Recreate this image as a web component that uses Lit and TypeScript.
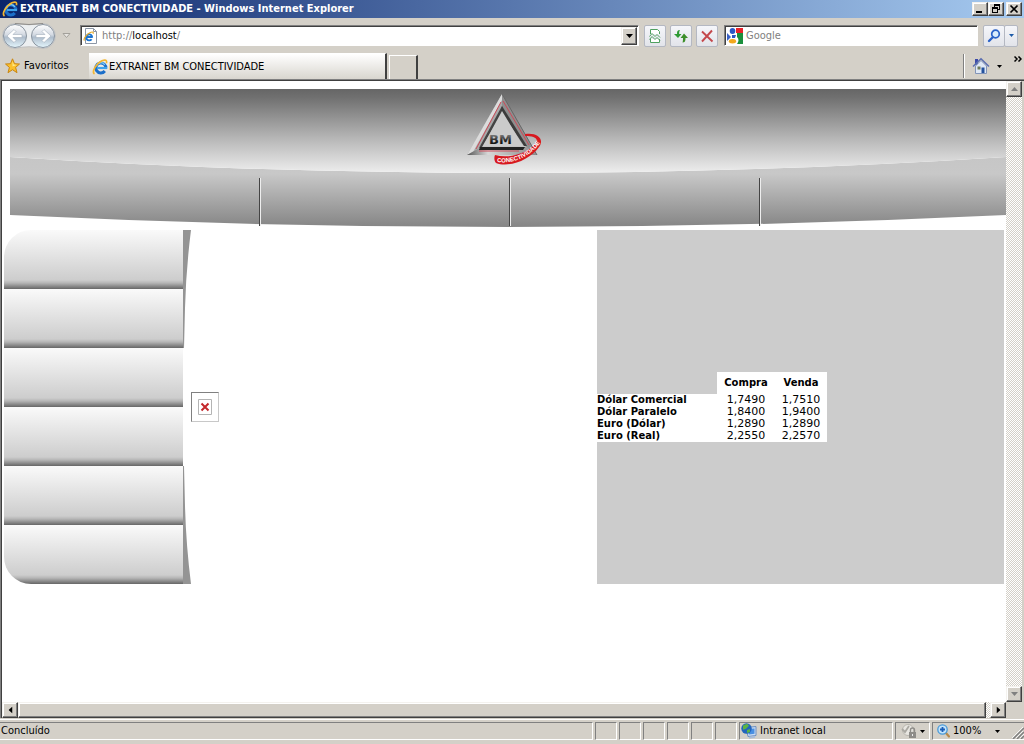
import { LitElement, html, css, svg } from "lit";
import { customElement } from "lit/decorators.js";

const ieLogo = html`<svg class="ie" viewBox="0 0 16 16" aria-hidden="true">
  <path d="M13.800 9.500A5 5 0 1 0 12.800 12" fill="none" stroke="#1c6fc9" stroke-width="3" />
  <path d="M5 9h10" stroke="#3da3ec" stroke-width="2.200" />
  <path d="M4.500 6.500A4.800 4.800 0 0 1 12.800 5.800" fill="none" stroke="#7dcdf9" stroke-width="1.300" />
  <path d="M2.500 15C-.6 13 4 4.600 10 1.800c3.400-1.500 5.200-.8 4.400 2.400" fill="none" stroke="#f2b632" stroke-width="1.700" />
</svg>`;

const caret = html`<svg class="caret" viewBox="0 0 7 4" aria-hidden="true"><path d="M0 0h7L3.500 4z" fill="currentColor" /></svg>`;

const rates = [
  ["Dólar Comercial", "1,7490", "1,7510"],
  ["Dólar Paralelo", "1,8400", "1,9400"],
  ["Euro (Dólar)", "1,2890", "1,2890"],
  ["Euro (Real)", "2,2550", "2,2570"],
];

const bevel = css`
  button {
    font: inherit;
    color: #000;
    padding: 0;
    margin: 0;
    display: flex;
    align-items: center;
    justify-content: center;
    border: 0;
    background: none;
    border-radius: 0;
    flex: none;
  }
  .raised {
    background: #d4d0c8;
    border: 1px solid;
    border-color: #f4f2ee #404040 #404040 #f4f2ee;
    box-shadow: inset -1px -1px #808080, inset 1px 1px #fff;
  }
  svg { display: block; flex: none; }
  .caret { width: 7px; height: 4px; }
`;

@customElement("window-title")
class WindowTitle extends LitElement {
  static styles = [bevel, css`
    :host { display: flex; align-items: center; height: 18px; padding: 0 2px; background: linear-gradient(90deg, #0a246a, #a6caf0); color: #fff; }
    h1 { font-size: 11px; line-height: 14px; font-weight: bold; margin: 0 auto 0 2px; white-space: nowrap; }
    .ie { width: 16px; height: 16px; }
    .raised { width: 16px; height: 14px; }
    .close { margin-left: 2px; }
    .glyph { width: 10px; height: 10px; }
  `];
  render() {
    return html`${ieLogo}
      <h1>EXTRANET BM CONECTIVIDADE - Windows Internet Explorer</h1>
      <button class="raised" aria-label="Minimizar"><svg class="glyph" viewBox="0 0 10 10"><path d="M1 7h6v2H1z" /></svg></button>
      <button class="raised" aria-label="Restaurar"><svg class="glyph" viewBox="0 0 10 10"><path d="M3 0h6v6H7V5h1V2H4v1H3zM1 3h6v6H1zm1 2v3h4V5z" fill-rule="evenodd" /></svg></button>
      <button class="raised close" aria-label="Fechar"><svg class="glyph" viewBox="0 0 10 10"><path d="M1.500 1.500l7 7m0-7l-7 7" stroke="#000" stroke-width="1.700" /></svg></button>`;
  }
}

@customElement("nav-toolbar")
class NavToolbar extends LitElement {
  static styles = [bevel, css`
    :host { display: flex; align-items: center; height: 35px; padding: 0 6px 0 2px; }
    .travel { width: 54px; height: 28px; }
    .travel-group { display: flex; position: relative; }
    .travel-hit { position: absolute; inset: 0; display: flex; }
    .travel-hit button { flex: 1; }
    .recent { width: 20px; height: 20px; }
    .field { display: flex; align-items: center; box-sizing: border-box; height: 21px; background: #fff; border: 1px solid; border-color: #808080 #fff #fff #808080; box-shadow: inset 1px 1px #404040; }
    .address { flex: 1; margin: 0 5px 0 4px; padding: 1px 1px 0 2px; }
    .search { width: 254px; margin: 0 5px 0 6px; padding: 1px 0 0 2px; }
    .entry { position: relative; flex: 1; margin-left: 3px; height: 16px; }
    input { font: inherit; line-height: 16px; border: 0; padding: 0; margin: 0; outline: 0; background: none; width: 100%; height: 16px; color: #808080; display: block; }
    input::placeholder { color: #808080; opacity: 1; }
    .address input { color: transparent; caret-color: #000; }
    .url { position: absolute; inset: 0; line-height: 16px; color: #808080; pointer-events: none; }
    .url b { font-weight: normal; color: #000; }
    .drop { width: 16px; height: 18px; }
    .tools { display: flex; gap: 4px; }
    .tool { width: 22px; height: 22px; background: linear-gradient(#f5f6fa, #e2e4ea); border: 1px solid #b4b8c2; border-radius: 2px; box-sizing: border-box; }
    .tool svg { width: 16px; height: 16px; }
    .find { display: flex; }
    .more { width: 14px; margin-left: -1px; color: #1c5ba8; }
    .tool .caret { width: 5px; height: 3px; }
    .page { width: 16px; height: 16px; }
    .recent svg { width: 9px; height: 6px; }
  `];
  render() {
    return html`
      <div class="travel-group">
        <svg class="travel" viewBox="0 0 54 28" aria-hidden="true">
          <defs><linearGradient id="orb" x2="0" y2="1"><stop offset="0" stop-color="#fff" /><stop offset=".45" stop-color="#d3d9e2" /><stop offset=".55" stop-color="#aebccb" /><stop offset="1" stop-color="#e4f6fd" /></linearGradient></defs>
          <path d="M13 1.500Q27 4 41 1.500a12.500 12.500 0 0 1 0 25Q27 23 13 26.500a12.500 12.500 0 0 1 0-25z" fill="#eceff1" stroke="#bfbfbf" />
          <path d="M13 1.500Q27 3.500 41 1.500" fill="none" stroke="#8f8d89" />
          <circle cx="13" cy="14" r="11.500" fill="url(#orb)" stroke="#8a949f" />
          <circle cx="41" cy="14" r="11.500" fill="url(#orb)" stroke="#8a949f" />
          <path d="M5 14l7-6.500 2 2-3 3h9v3h-9l3 3-2 2z" fill="#fff" stroke="#a3afbc" stroke-width=".6" />
          <path d="M49 14l-7-6.500-2 2 3 3h-9v3h9l-3 3 2 2z" fill="#fff" stroke="#a3afbc" stroke-width=".6" />
        </svg>
        <div class="travel-hit"><button aria-label="Voltar"></button><button aria-label="Avançar"></button></div>
      </div>
      <button class="recent" aria-label="Páginas recentes"><svg viewBox="0 0 9 6"><path d="M1 .5h7L4.500 4.500z" fill="#e8e6e2" stroke="#a3a09a" /></svg></button>
      <div class="field address">
        <svg class="page" viewBox="0 0 16 16" aria-hidden="true">
          <path d="M2.500.5h8l3 3v12h-11z" fill="#fff" stroke="#8c97a6" /><path d="M10.500.5v3h3" fill="none" stroke="#8c97a6" />
          <path d="M9.200 9.500A3 3 0 1 0 8.600 11.200M3.500 9h6" fill="none" stroke="#1c74cf" stroke-width="1.900" />
          <path d="M1.500 12.500C-.2 11 4 5.500 8 4.200c2-.6 2.600 0 2 1.600" fill="none" stroke="#e4a92a" stroke-width="1.200" />
        </svg>
        <div class="entry"><input aria-label="Endereço" value="http://localhost/" /><span class="url" aria-hidden="true">http://<b>localhost</b>/</span></div>
        <button class="raised drop" aria-label="Mostrar endereços">${caret}</button>
      </div>
      <div class="tools">
        <button class="tool" aria-label="Modo de exibição"><svg viewBox="0 0 16 16"><path d="M3.500 6V1.500h7l2 2V6M3.500 11v3.500h9V11" fill="#fff" stroke="#4fa060" /><path d="M2.500 8.500l2.500-3 3 3 2-2 3 3M2.500 11.500l2.500-3 3 3 2-2 3 3" fill="none" stroke="#4fa060" /></svg></button>
        <button class="tool" aria-label="Atualizar"><svg viewBox="0 0 16 16"><path d="M7 2C4.500 2 4 3 4 6H1l4 4 3.500-4H6.200c0-2 0-2.500.8-4z" fill="#2f9b36" /><path d="M9.500 14.500c2.500 0 3-1.500 3-4.500H15l-4-4.500L7.500 10H10c0 2 0 3-.5 4.500z" fill="#3d8f2a" /></svg></button>
        <button class="tool" aria-label="Parar"><svg viewBox="0 0 16 16"><path d="M3 3.500l10.500 10M13 2.500L3 13.500" fill="none" stroke="#c4484c" stroke-width="1.900" /></svg></button>
      </div>
      <div class="field search">
        <svg class="page" viewBox="0 0 16 16" aria-hidden="true"><path fill="#fff" d="M0 0h16v16H0z" /><path d="M9 0h7v5H9z" fill="#e8232a" /><path d="M10 5h6v11h-6c2-3 2-5 0-7z" fill="#1a8f3c" /><path d="M0 5l4 4-4 4z" fill="#3b62c4" /><ellipse cx="5.500" cy="3" rx="2.800" ry="3" fill="#2c57c6" /><path d="M5 7h4l-1 3H5z" fill="#2c57c6" /><ellipse cx="5.500" cy="13.300" rx="3.600" ry="2.200" fill="#f3a81c" /></svg>
        <div class="entry"><input aria-label="Pesquisar" placeholder="Google" /></div>
      </div>
      <div class="find">
        <button class="tool" aria-label="Executar pesquisa"><svg viewBox="0 0 16 16"><path d="M7.500 8.500L3 13" stroke="#2a62c8" stroke-width="2.400" stroke-linecap="round" /><circle cx="9.500" cy="6" r="3.800" fill="#d9ecfc" stroke="#2a62c8" stroke-width="1.700" /></svg></button>
        <button class="tool more" aria-label="Opções de pesquisa">${caret}</button>
      </div>`;
  }
}

@customElement("tab-strip")
class TabStrip extends LitElement {
  static styles = [bevel, css`
    :host { display: flex; height: 26px; padding: 0 2px 0 5px; align-items: center; }
    .fav { gap: 4px; width: 84px; justify-content: flex-start; }
    .fav svg { width: 15px; height: 16px; }
    .tab { box-sizing: border-box; width: 298px; height: 26px; gap: 1px; padding-left: 3px; justify-content: flex-start; white-space: nowrap; background: linear-gradient(#fff, #d9d6cf); border-top: 1px solid #fff; border-right: 2px solid #404040; }
    .ie { width: 16px; height: 16px; }
    .new { align-self: flex-end; box-sizing: border-box; width: 29px; height: 24px; margin-left: 2px; border: 1px solid #fff; border-bottom: 0; border-right: 2px solid #404040; }
    .rule { width: 1px; height: 24px; background: #808080; border-right: 1px solid #fff; margin-left: auto; }
    .home { gap: 7px; margin-left: 7px; }
    .home .house { width: 18px; height: 18px; }
    .home .caret { width: 5px; height: 3px; }
    .chevrons { margin: 0 0 14px 12px; }
    .chevrons svg { width: 8px; height: 6px; }
  `];
  render() {
    return html`
      <button class="fav"><svg viewBox="0 0 15 16" aria-hidden="true"><path d="M7.500.8l2 4.900 5 .3-3.900 3.400 1.400 5.300-4.500-3-4.500 3 1.400-5.300L.5 6l5-.3z" fill="#fbc02a" stroke="#c98612" stroke-linejoin="round" /><path d="M7.500 3l1.200 3.600 3 .3-4.200 1.600z" fill="#ffe88a" /></svg>Favoritos</button>
      <button class="tab">${ieLogo}EXTRANET BM CONECTIVIDADE</button>
      <button class="new" aria-label="Nova guia"></button>
      <span class="rule"></span>
      <button class="home" aria-label="Página inicial"><svg class="house" viewBox="0 0 18 18"><path d="M3 2h3v6H3z" fill="#3b49a8" /><path d="M3.500 9v7.500h11V9L9 3.500z" fill="#dfe8f5" stroke="#8294b8" /><path d="M1 9.500L9 1.800l8 7.700" fill="none" stroke="#5c6fb0" stroke-width="1.500" /><path d="M9.500 10.500h3V16h-3z" fill="#24519c" /><path d="M5.500 9.500h3v3h-3z" fill="#6d7a58" /></svg>${caret}</button>
      <button class="chevrons" aria-label="Mais comandos"><svg viewBox="0 0 8 6"><path d="M.5.5L3 3 .5 5.500M4.500.5L7 3 4.500 5.500" fill="none" stroke="#000" stroke-width="1.500" /></svg></button>`;
  }
}

@customElement("site-banner")
class SiteBanner extends LitElement {
  static styles = css`
    :host { display: grid; height: 138px; }
    .sweep, .rules, .logo { grid-area: 1 / 1; }
    .sweep { width: 100%; height: 138px; display: block; }
    .rules { display: grid; grid-template-columns: repeat(4, 250px); justify-content: start; padding: 89px 0 1px 1px; overflow: hidden; }
    .rules i { border-right: 1px solid #eee; box-shadow: inset -1px 0 #444; }
    .rules i:last-child { border: 0; box-shadow: none; }
    .logo { width: 76px; height: 74px; margin: 4px 6px 0 0; justify-self: center; }
  `;
  render() {
    return html`
      <svg class="sweep" viewBox="0 0 996 138" preserveAspectRatio="none" aria-hidden="true">
        <defs>
          <linearGradient id="top" gradientUnits="userSpaceOnUse" x1="0" y1="0" x2="0" y2="84"><stop offset="0" stop-color="#666" /><stop offset=".1" stop-color="#707070" /><stop offset=".6" stop-color="#b8b8b8" /><stop offset="1" stop-color="#eee" /></linearGradient>
          <linearGradient id="low" gradientUnits="userSpaceOnUse" x1="0" y1="68" x2="0" y2="138"><stop offset="0" stop-color="#c6c6c6" /><stop offset=".24" stop-color="#c8c8c8" /><stop offset="1" stop-color="#858585" /></linearGradient>
        </defs>
        <path d="M0 68Q498 100 996 68V126Q498 150 0 126z" fill="url(#low)" />
        <path d="M0 0H996V68Q498 100 0 68z" fill="url(#top)" />
      </svg>
      <div class="rules"><i></i><i></i><i></i><i></i></div>
      <svg class="logo" viewBox="0 0 76 74" role="img" aria-label="BM Conectividade">
        <defs>
          <linearGradient id="steel" x2="1" y2="0"><stop offset="0" stop-color="#555" /><stop offset=".3" stop-color="#d8d8d8" /><stop offset="1" stop-color="#888" /></linearGradient>
          <linearGradient id="letters" x2="0" y2="1"><stop offset=".2" stop-color="#777" /><stop offset=".6" stop-color="#222" /><stop offset="1" stop-color="#000" /></linearGradient>
        </defs>
        <path d="M35 1L0 62L14 54L35 15z" fill="#a9a9a9" />
        <path d="M35 1L0 62L6 59L35 7z" fill="#dcdcdc" />
        <path d="M0 62L14 54H59L70 62z" fill="url(#steel)" />
        <path d="M35 1V15L59 54L70 62z" fill="#8e8e8e" />
        <path d="M35 1L70 62" stroke="#666" />
        <path d="M35 13L12 55L15 54L36 18z" fill="#444" />
        <path d="M35 13L60 53L57 53L34 18z" fill="#3c3c3c" />
        <path d="M13 54H58L56 57H12z" fill="#222" />
        <path d="M34 9L9 56M36 8L62 52M12 58H52" stroke="#cc4a58" fill="none" />
        <path d="M35 18L16 53H56z" fill="#cbcbcb" />
        <text x="22" y="51" font-family="DejaVu Sans, sans-serif" font-size="13" font-weight="bold" fill="url(#letters)">BM</text>
        <path d="M58 41C70 39 78 46 72 54C63 67 42 75 29 70C27 68 27 64 28 62C43 66 61 60 69 50C72 45 66 43 58 43z" fill="#d71920" />
        <path id="arc" d="M30 69C46 71 62 65 74 49" fill="none" />
        <text font-family="Liberation Sans, sans-serif" font-size="6" font-weight="bold" fill="#fff"><textPath href="#arc">CONECTIVIDADE</textPath></text>
      </svg>`;
  }
}

@customElement("side-menu")
class SideMenu extends LitElement {
  static styles = css`
    :host { display: flex; flex: none; }
    nav { width: 179px; border-radius: 27px 0 0 27px; overflow: hidden; }
    a { display: block; height: 59px; background: linear-gradient(#fafafa 0, #cdcdcd 50px, #b5b5b5 53px, #666 59px); }
    svg { width: 8px; height: 354px; display: block; }
  `;
  render() {
    return html`<nav aria-label="Menu">${[1, 2, 3, 4, 5, 6].map((n) => html`<a href="#" aria-label=${"Seção " + n}></a>`)}</nav>
      <svg viewBox="0 0 8 354" aria-hidden="true">${svg`<path d="M0 0H8Q3 40 2 78L1 118H0zM0 236H1L2 276Q3 314 8 354H0z" fill="#949494" />`}</svg>`;
  }
}

@customElement("rates-table")
class RatesTable extends LitElement {
  static styles = css`
    table { border-collapse: collapse; table-layout: fixed; width: 230px; font: 11px/12px "DejaVu Sans", sans-serif; color: #000; }
    th, td { padding: 0; background: #fff; height: 12px; text-align: center; white-space: nowrap; }
    th { font-size: 10px; }
    thead th { height: 22px; }
    thead td { background: none; }
    tbody th { text-align: left; }
    .name { width: 120px; }
    .buy { width: 58px; }
  `;
  render() {
    return html`<table>
      <thead><tr><td class="name"></td><th class="buy" scope="col">Compra</th><th scope="col">Venda</th></tr></thead>
      <tbody>${rates.map(([name, buy, sell]) => html`<tr><th scope="row">${name}</th><td>${buy}</td><td>${sell}</td></tr>`)}</tbody>
    </table>`;
  }
}

@customElement("page-view")
class PageView extends LitElement {
  static styles = [bevel, css`
    :host { display: grid; grid-template: minmax(0, 1fr) 16px / minmax(0, 1fr) 16px; min-height: 0; padding: 1px 2px 0 1px; border: 1px solid #808080; border-width: 1px 0 0 1px; box-shadow: inset 1px 1px #404040; background: #d4d0c8; }
    main { background: #fff; overflow: hidden; }
    site-banner { margin: 8px 0 3px 8px; }
    .body { display: flex; padding: 0 2px; }
    .left, .right { flex: 1 1 0px; display: flex; align-items: center; }
    .right { flex-basis: 1px; background: #ccc; }
    .missing { box-sizing: border-box; width: 28px; height: 30px; border: 1px solid; border-color: #808080 #c8c8c8 #c8c8c8 #808080; display: grid; place-items: center; }
    .missing svg { width: 14px; height: 16px; }
    .bar { display: flex; }
    .down { flex-direction: column; }
    .track { flex: 1; background: repeating-conic-gradient(#fff 0 25%, #d4d0c8 0 50%) 0 0 / 2px 2px; display: flex; }
    .thumb { flex: 1; margin-right: 4px; }
    .bar button { width: 16px; height: 16px; }
    .off { color: #808080; }
    .up .caret { transform: rotate(180deg); }
    .west .caret { transform: rotate(90deg); }
    .east .caret { transform: rotate(-90deg); }
  `];
  render() {
    return html`
      <main>
        <site-banner></site-banner>
        <div class="body">
          <side-menu></side-menu>
          <div class="left"><div class="missing" role="img" aria-label="Imagem indisponível"><svg viewBox="0 0 14 16"><path d="M.5.5h13v15H.5z" fill="#fff" stroke="#b4b4b4" /><path d="M3.500 4.500l7 7m0-7l-7 7" stroke="#c4282c" stroke-width="2" /></svg></div></div>
          <div class="right"><rates-table></rates-table></div>
        </div>
      </main>
      <div class="bar down">
        <button class="raised off up" aria-label="Rolar para cima">${caret}</button>
        <div class="track"></div>
        <button class="raised off" aria-label="Rolar para baixo">${caret}</button>
      </div>
      <div class="bar">
        <button class="raised west" aria-label="Rolar para a esquerda">${caret}</button>
        <div class="track"><div class="thumb raised"></div></div>
        <button class="raised east" aria-label="Rolar para a direita">${caret}</button>
      </div>`;
  }
}

@customElement("status-bar")
class StatusBar extends LitElement {
  static styles = [bevel, css`
    :host { display: flex; gap: 2px; padding: 2px 0 1px; margin: 1px 0 3px; border-top: 1px solid #fff; }
    .cell { box-sizing: border-box; display: flex; align-items: center; height: 18px; border: 1px solid; border-color: #808080 #fff #fff #808080; width: 22px; white-space: nowrap; }
    .message { flex: 1; border-left: 0; padding-left: 1px; }
    .zone { width: 154px; gap: 3px; padding-left: 1px; }
    .zone svg, .lock svg:first-child, .scale svg:first-child { width: 16px; height: 16px; }
    .lock { width: 35px; gap: 3px; }
    .scale { width: 92px; gap: 1px; padding-left: 3px; border-right: 0; }
    .scale .caret { margin-left: 13px; }
    .cell .caret { width: 5px; height: 3px; }
    .grip { width: 12px; height: 12px; margin: 4px 0 0 auto; }
  `];
  render() {
    return html`
      <div class="cell message" role="status">Concluído</div>
      ${[0, 1, 2, 3, 4, 5].map(() => html`<div class="cell"></div>`)}
      <div class="cell zone"><svg viewBox="0 0 16 16" aria-hidden="true"><path d="M5 4.500l10-1v9l-8 1z" fill="#c9dcf3" stroke="#6e8fc0" /><path d="M7 6l6.500-.6v5.400L8 11.500z" fill="#4a90e2" /><path d="M8 14.800l6-1" stroke="#a9bcd8" stroke-width="2" /><circle cx="5.500" cy="5.500" r="5.200" fill="#2366bd" /><path d="M2 2.500l4-1.700 2 2-3 3-3 1zM6 7l3-1v3l-3 1z" fill="#5cb544" /></svg>Intranet local</div>
      <button class="cell lock" aria-label="Modo protegido"><svg viewBox="0 0 16 16"><circle cx="7" cy="7" r="5.500" fill="#e8e6e1" stroke="#b9b6af" /><path d="M1 6l3 3 4-6" fill="none" stroke="#aaa8a2" stroke-width="1.800" /><path d="M8 9h7v6H8z" fill="#8e8c88" /><path d="M9.500 9V7a2 2 0 0 1 4 0v2" fill="none" stroke="#8e8c88" stroke-width="1.400" /><path d="M11 11h1v2h-1z" fill="#eee" /></svg>${caret}</button>
      <button class="cell scale"><svg viewBox="0 0 16 16" aria-hidden="true"><path d="M9 9l4 4.500" stroke="#b98a4a" stroke-width="2.200" stroke-linecap="round" /><circle cx="6.500" cy="6.500" r="4.700" fill="#c3e3fa" stroke="#4a9ad8" stroke-width="1.300" /><path d="M6.500 4v5M4 6.500h5" stroke="#1c5fb8" stroke-width="1.800" /></svg>100%${caret}<svg class="grip" viewBox="0 0 12 12" aria-hidden="true"><path d="M1 12L12 1M5 12l7-7M9 12l3-3" stroke="#808080" stroke-width="1.500" /><path d="M0 11L11 0M4 11l7-7M8 11l4-4" stroke="#fff" stroke-width=".8" /></svg></button>`;
  }
}

@customElement("app-root")
class AppRoot extends LitElement {
  static styles = css`
    :host { display: flex; flex-direction: column; height: 100vh; background: #d4d0c8; color: #000; font: 11px/14px "DejaVu Sans Condensed", "DejaVu Sans", sans-serif; overflow: hidden; }
    page-view { flex: 1; }
  `;
  render() {
    return html`<window-title></window-title><nav-toolbar></nav-toolbar><tab-strip></tab-strip><page-view></page-view><status-bar></status-bar>`;
  }
}
